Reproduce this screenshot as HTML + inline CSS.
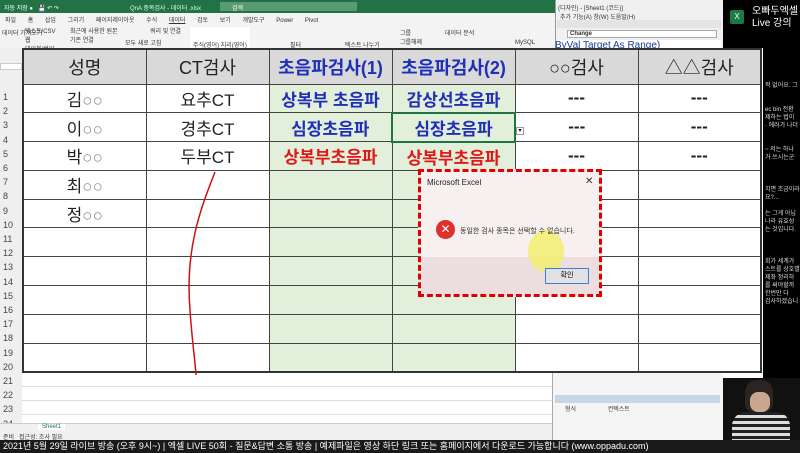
<!DOCTYPE html>
<html><head><meta charset="utf-8"><style>
*{margin:0;padding:0;box-sizing:border-box}
body{width:800px;height:453px;overflow:hidden;position:relative;background:#fff;font-family:"Liberation Sans","Noto Sans CJK KR",sans-serif}
.a{position:absolute}
.t{font-size:6px;color:#333;white-space:nowrap}
#tbl{position:absolute;left:22px;top:48px;border-collapse:collapse;border:2px solid #333}
#tbl td{border:1px solid #444;width:123px;height:28.8px;text-align:center;font-size:17px;color:#222;padding:0}
#tbl tr:first-child td{background:#d9d9d9;height:35px;font-size:18px}
.g{background:#e2efda}
.b{color:#1f2fb8 !important;font-weight:bold}
.r{color:#e01818 !important;font-weight:bold}
.o{color:#888}
</style></head><body>
<div class="a" style="left:0;top:0;width:555px;height:13px;background:#217346"></div>
<div class="a t" style="left:4px;top:3px;color:#fff">자동 저장 ● &nbsp; 💾 ↶ ↷</div>
<div class="a t" style="left:130px;top:3px;color:#dfe">QnA 중복검사 - 데이터 .xlsx</div>
<div class="a" style="left:220px;top:2px;width:137px;height:9px;background:#5a9a72"></div>
<div class="a t" style="left:232px;top:3px;color:#fff">검색</div>
<div class="a" style="left:0;top:13px;width:555px;height:35px;background:#f3f3f3"></div>
<div class="a t" style="left:5px;top:15px;word-spacing:10px">파일 홈 삽입 그리기 페이지레이아웃 수식 <u>데이터</u> 검토 보기 개발도구 Power Pivot</div>
<div class="a" style="left:190px;top:27px;width:60px;height:21px;background:#fff"></div>
<div class="a t" style="left:2px;top:28px">데이터 가져오기</div>
<div class="a t" style="left:25px;top:26px">텍스트/CSV<br>웹<br>테이블/범위</div>
<div class="a t" style="left:70px;top:26px">최근에 사용한 원본<br>기존 연결</div>
<div class="a t" style="left:125px;top:38px">모두 새로 고침</div>
<div class="a t" style="left:150px;top:26px">쿼리 및 연결</div>
<div class="a t" style="left:193px;top:40px">주식(영어) 지리(영어)</div>
<div class="a t" style="left:290px;top:40px">필터</div>
<div class="a t" style="left:345px;top:40px">텍스트 나누기</div>
<div class="a t" style="left:400px;top:28px">그룹<br>그룹해제</div>
<div class="a t" style="left:445px;top:28px">데이터 분석</div>
<div class="a t" style="left:515px;top:40px">MySQL</div>
<div class="a" style="left:555px;top:0;width:168px;height:48px;background:#f0f0f0;border-left:1px solid #999"></div>
<div class="a t" style="left:558px;top:3px">(디자인) - [Sheet1 (코드)]</div>
<div class="a t" style="left:560px;top:12px">추가 기능(A) 창(W) 도움말(H)</div>
<div class="a" style="left:557px;top:20px;width:164px;height:8px;background:#e4e4e4"></div>
<div class="a" style="left:567px;top:30px;width:150px;height:8px;background:#fff;border:1px solid #aaa"></div>
<div class="a t" style="left:570px;top:31px;font-weight:bold">Change</div>
<div class="a" style="left:557px;top:40px;width:164px;height:8px;background:#fff"></div>
<div class="a" style="left:555px;top:40px;font-size:10px;color:#1a3a9a;white-space:nowrap">ByVal Target As Range)</div>
<div class="a" style="left:723px;top:0;width:77px;height:48px;background:#000"></div>
<div class="a" style="left:730px;top:10px;width:14px;height:14px;background:#1d7a43;border-radius:2px;color:#fff;font-size:8px;text-align:center;line-height:14px">X</div>
<div class="a" style="left:752px;top:6px;color:#fff;font-size:10px;line-height:12px;white-space:nowrap">오빠두엑셀<br>Live 강의</div>
<div class="a" style="left:0;top:48px;width:22px;height:380px;background:#efefef"></div>
<div class="a" style="left:0;top:63px;width:22px;height:7px;background:#fff;border:1px solid #ccc"></div>
<div class="a" style="left:3px;top:90px;font-size:9px;color:#444;line-height:14.2px">1<br>2<br>3<br>4<br>5<br>6<br>7<br>8<br>9<br>10<br>11<br>12<br>13<br>14<br>15<br>16<br>17<br>18<br>19<br>20<br>21<br>22<br>23<br>24<br>25</div>
<div class="a" style="left:22px;top:373px;width:530px;height:50px;background:repeating-linear-gradient(#fff 0 13px,#ddd 13px 14px),#fff"></div>
<div class="a" style="left:0;top:423px;width:555px;height:17px;background:#f0f0f0;border-top:1px solid #ccc"></div>
<div class="a t" style="left:38px;top:424px;color:#217346;background:#fff;padding:0 4px">Sheet1</div>
<div class="a t" style="left:3px;top:432px">준비 &nbsp; 접근성: 조사 필요</div>
<div class="a" style="left:552px;top:373px;width:171px;height:67px;background:#f5f5f5;border-left:1px solid #aaa"></div>
<div class="a" style="left:555px;top:395px;width:165px;height:8px;background:#c6d6e6"></div>
<div class="a t" style="left:565px;top:404px">형식 &nbsp;&nbsp;&nbsp;&nbsp;&nbsp;&nbsp;&nbsp;&nbsp;&nbsp;&nbsp;&nbsp;&nbsp;&nbsp;&nbsp;&nbsp;&nbsp;&nbsp; 컨텍스트</div>
<div class="a" style="left:763px;top:48px;width:37px;height:330px;background:#000"></div>
<div class="a" style="left:765px;top:82px;font-size:6px;color:#ddd;line-height:8px;white-space:nowrap">적 없어요. 그<br><br><br>ec bin 전환<br>제하는 법이<br>· 에러가 나더<br><br><br>~ 저는 하나<br>거 쓰시는군<br><br><br><br>치면 조금이라<br>요?...<br><br>는 그게 아닙<br>나라 유효성<br>는 것입니다.<br><br><br><br>회가 세계가<br>스트를 상호별<br>제좌 정리하<br>를 써야할까<br>한번만 다<br>검사하겠습니</div>
<div class="a" style="left:723px;top:378px;width:77px;height:62px;background:#111"></div>
<div class="a" style="left:745px;top:380px;width:28px;height:32px;background:#2a2522;border-radius:12px 12px 8px 8px"></div>
<div class="a" style="left:750px;top:392px;width:20px;height:20px;background:#c9a68e;border-radius:8px"></div>
<div class="a" style="left:732px;top:412px;width:58px;height:28px;border-radius:14px 14px 0 0;background:repeating-linear-gradient(#222 0 3px,#ddd 3px 6px)"></div>
<table id="tbl">
<tr><td>성명</td><td>CT검사</td><td class="b">초음파검사(1)</td><td class="b">초음파검사(2)</td><td>○○검사</td><td>△△검사</td></tr>
<tr><td>김<span class="o">○○</span></td><td>요추CT</td><td class="g b">상복부 초음파</td><td class="g b">감상선초음파</td><td><b>---</b></td><td><b>---</b></td></tr>
<tr><td>이<span class="o">○○</span></td><td>경추CT</td><td class="g b">심장초음파</td><td class="g b" style="border:2px solid #217346">심장초음파</td><td><b>---</b></td><td><b>---</b></td></tr>
<tr><td>박<span class="o">○○</span></td><td>두부CT</td><td class="g r">상복부초음파</td><td class="g r">상복부초음파</td><td><b>---</b></td><td><b>---</b></td></tr>
<tr><td>최<span class="o">○○</span></td><td></td><td class="g"></td><td class="g"></td><td></td><td></td></tr>
<tr><td>정<span class="o">○○</span></td><td></td><td class="g"></td><td class="g"></td><td></td><td></td></tr>
<tr><td></td><td></td><td class="g"></td><td class="g"></td><td></td><td></td></tr>
<tr><td></td><td></td><td class="g"></td><td class="g"></td><td></td><td></td></tr>
<tr><td></td><td></td><td class="g"></td><td class="g"></td><td></td><td></td></tr>
<tr><td></td><td></td><td class="g"></td><td class="g"></td><td></td><td></td></tr>
<tr><td></td><td></td><td class="g"></td><td class="g"></td><td></td><td></td></tr>
</table>
<div class="a" style="left:516px;top:127px;width:8px;height:8px;background:#fff;border:1px solid #999;font-size:6px;line-height:7px;text-align:center">▾</div>
<svg class="a" style="left:180px;top:170px" width="40" height="210"><path d="M35 2 C20 40 5 80 10 140 C12 170 15 190 16 205" stroke="#d01010" stroke-width="1.5" fill="none"/></svg>
<div class="a" style="left:418px;top:169px;width:184px;height:128px;border:3px dashed #e00000;background:#f6eeee"></div>
<div class="a" style="left:421px;top:172px;width:178px;height:85px;background:#f6f0f0"></div>
<div class="a" style="left:421px;top:257px;width:178px;height:37px;background:#ecdede"></div>
<div class="a" style="left:427px;top:178px;font-size:8px;color:#222">Microsoft Excel</div>
<div class="a" style="left:585px;top:176px;font-size:10px;color:#333">✕</div>
<div class="a" style="left:436px;top:220px;width:19px;height:19px;border-radius:50%;background:#e0302a;color:#fff;font-size:12px;text-align:center;line-height:19px">✕</div>
<div class="a" style="left:528px;top:230px;width:36px;height:42px;border-radius:50%;background:#f2ee70;opacity:.85"></div>
<div class="a t" style="left:460px;top:226px;font-size:7px;color:#333">동일한 검사 종목은 선택할 수 없습니다.</div>
<div class="a" style="left:545px;top:268px;width:44px;height:16px;border:1px solid #3c7fd8;background:#e1e1e1;font-size:7px;text-align:center;line-height:14px">확인</div>
<div class="a" style="left:0;top:440px;width:800px;height:13px;background:#1a1a1a"></div>
<div class="a" style="left:3px;top:440px;font-size:9px;color:#fff;white-space:nowrap;line-height:13px">2021년 5월 29일 라이브 방송 (오후 9시~) | 엑셀 LIVE 50회 - 질문&amp;답변 소통 방송 | 예제파일은 영상 하단 링크 또는 홈페이지에서 다운로드 가능합니다 (www.oppadu.com)</div>
</body></html>
